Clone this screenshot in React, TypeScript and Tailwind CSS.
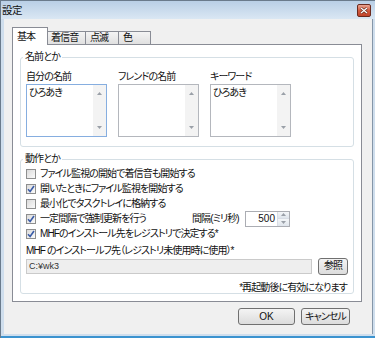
import type { ReactNode } from 'react';

const font = "font-['Liberation_Sans','Noto_Sans_CJK_JP',sans-serif] [font-feature-settings:'palt']";

function CloseButton() {
    return (
        <div className="w-[14px] h-[13px] rounded-[2px] border border-[#6b2a1e] bg-linear-to-b from-[#e9a492] via-[#d25c40] to-[#c0442a] flex items-center justify-center">
            <svg width="8" height="7" viewBox="0 0 8 7">
                <path d="M1 1 L7 6 M7 1 L1 6" stroke="#5a2418" strokeWidth="2.4" />
                <path d="M1 1 L7 6 M7 1 L1 6" stroke="#ffffff" strokeWidth="1.3" />
            </svg>
        </div>
    );
}

function Arrow({ up }: { up?: boolean }) {
    return (
        <svg width="5" height="3" viewBox="0 0 5 3">
            <path d={up ? 'M0 3 L2.5 0 L5 3 Z' : 'M0 0 L2.5 3 L5 0 Z'} fill="#9aa0a8" />
        </svg>
    );
}

function TextBox({ value, focused }: { value?: string; focused?: boolean }) {
    return (
        <div className={`h-[53px] w-[81px] flex bg-white border ${focused ? 'border-[#86aee0]' : 'border-[#b4b7bd]'}`}>
            <div className="flex-1 pl-[2px] pt-[2px]">{value}</div>
            <div className="w-[13px] bg-[#f3f3f3] flex flex-col justify-between items-center py-[7px]">
                <Arrow up />
                <Arrow />
            </div>
        </div>
    );
}

function Checkbox({ checked }: { checked?: boolean }) {
    return (
        <span className="w-[10px] h-[10px] shrink-0 border border-[#8e8f8f] bg-linear-to-br from-[#dadada] to-[#fbfbfb] flex items-center justify-center">
            {checked && (
                <svg width="8" height="8" viewBox="0 0 8 8">
                    <path d="M1 4.3 L3.1 6.5 L7 1" stroke="#3a5ca8" strokeWidth="1.6" fill="none" />
                </svg>
            )}
        </span>
    );
}

function CheckRow({ checked, children }: { checked?: boolean; children: ReactNode }) {
    return (
        <div className="h-[15px] flex items-center">
            <Checkbox checked={checked} />
            <span className="ml-[4px] whitespace-nowrap">{children}</span>
        </div>
    );
}

function Button({ w, children }: { w: string; children: ReactNode }) {
    return (
        <div className={`${w} h-[17px] rounded-[3px] border border-[#707070] bg-linear-to-b from-[#f4f4f4] to-[#dcdcdc] flex items-center justify-center`}>
            {children}
        </div>
    );
}

export default function App() {
    return (
        <div className={`w-[375px] h-[338px] flex flex-col bg-[#cfdeed] border-l border-t border-[#6a7b8c] text-[10px] leading-[12px] tracking-[-0.9px] text-[#111] ${font}`}>
            <div className="h-[18px] shrink-0 flex items-center justify-between bg-linear-to-b from-[#b9cfe6] to-[#dae7f3] pl-[1px] pr-[4px]">
                <span className="text-[10.5px] tracking-[-0.5px]">設定</span>
                <CloseButton />
            </div>

            <div className="flex-1 ml-[3px] mr-[2px] bg-[#f0f0f0] border-r border-[#8596a8] flex flex-col pt-[8px]">
                {/* tabs */}
                <div className="h-[17px] ml-[8px] flex items-end">
                    <div className="relative z-10 -mb-[1px] h-[18px] w-[36px] bg-white border border-b-0 border-[#898c95] flex items-center pl-[4px]">基本</div>
                    <div className="h-[13px] w-[38px] border-t border-r border-[#898c95] bg-linear-to-b from-[#f4f4f4] to-[#e0e0e0] flex items-center pl-[3px]">着信音</div>
                    <div className="h-[13px] w-[33px] border-t border-r border-[#898c95] bg-linear-to-b from-[#f4f4f4] to-[#e0e0e0] flex items-center pl-[4px]">点滅</div>
                    <div className="h-[13px] w-[32px] border-t border-r border-[#898c95] bg-linear-to-b from-[#f4f4f4] to-[#e0e0e0] flex items-center pl-[4px]">色</div>
                </div>

                {/* panel */}
                <div className="h-[258px] ml-[8px] mr-[10px] bg-white border border-[#898c95] px-[7px] pt-[6px] flex flex-col">
                    <fieldset className="border border-[#d5dfe5] rounded-[3px] px-[5px] pb-[9px]">
                        <legend className="-ml-[3px] px-[2px]">名前とか</legend>
                        <div className="mt-[8px] flex gap-[11px]">
                            <div>
                                <div>自分の名前</div>
                                <div className="mt-[1px]"><TextBox value="ひろあき" focused /></div>
                            </div>
                            <div>
                                <div>フレンドの名前</div>
                                <div className="mt-[1px]"><TextBox /></div>
                            </div>
                            <div>
                                <div>キーワード</div>
                                <div className="mt-[1px]"><TextBox value="ひろあき" /></div>
                            </div>
                        </div>
                    </fieldset>

                    <fieldset className="mt-[6px] border border-[#d5dfe5] rounded-[3px] px-[5px]">
                        <legend className="-ml-[3px] px-[2px]">動作とか</legend>
                        <div className="mt-[1px] flex flex-col">
                            <CheckRow>ファイル監視の開始で着信音も開始する</CheckRow>
                            <CheckRow checked>開いたときにファイル監視を開始する</CheckRow>
                            <CheckRow>最小化でタスクトレイに格納する</CheckRow>
                            <div className="h-[15px] flex items-center">
                                <Checkbox checked />
                                <span className="ml-[4px] w-[152px] shrink-0 whitespace-nowrap">一定間隔で強制更新を行う</span>
                                <span className="w-[53px] shrink-0 whitespace-nowrap">間隔(ミリ秒)</span>
                                <div className="w-[45px] h-[16px] shrink-0 border border-[#abadb3] bg-white flex">
                                    <span className="flex-1 text-right pr-[2px] leading-[14px] tracking-normal">500</span>
                                    <div className="w-[12px] flex flex-col border-l border-[#d8dde5]">
                                        <div className="flex-1 bg-linear-to-b from-[#f4f6f8] to-[#dfe5ec] flex items-center justify-center"><Arrow up /></div>
                                        <div className="flex-1 bg-linear-to-b from-[#f4f6f8] to-[#dfe5ec] flex items-center justify-center border-t border-[#d8dde5]"><Arrow /></div>
                                    </div>
                                </div>
                            </div>
                            <CheckRow checked>MHFのインストール先をレジストリで決定する*</CheckRow>
                        </div>
                        <div className="mt-[4px] whitespace-nowrap">MHF のインストールフ先（レジストリ未使用時に使用）*</div>
                        <div className="mt-[1px] h-[16px] flex items-center gap-[6px]">
                            <div className="flex-1 h-[15px] border border-[#cacaca] bg-[#eeeeee] pl-[2px] text-[9px] leading-[13px] tracking-normal text-[#333]">C:¥wk3</div>
                            <Button w="w-[30px]">参照</Button>
                        </div>
                        <div className="mt-[8px] leading-[11px] text-right pr-[1px]">*再起動後に有効になります</div>
                    </fieldset>
                </div>

                <div className="mt-[6px] pr-[22px] flex justify-end gap-[6px]">
                    <Button w="w-[57px]"><span className="tracking-normal">OK</span></Button>
                    <Button w="w-[49px]">キャンセル</Button>
                </div>
            </div>

            <div className="h-[2px] shrink-0" />
            <div className="h-[2px] shrink-0 bg-[#3c93cf]" />
        </div>
    );
}
